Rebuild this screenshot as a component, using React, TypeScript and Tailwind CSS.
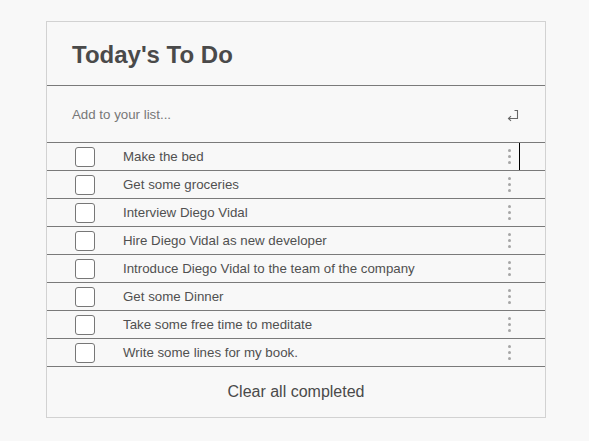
import React from 'react'

const items = [
  'Make the bed',
  'Get some groceries',
  'Interview Diego Vidal',
  'Hire Diego Vidal as new developer',
  'Introduce Diego Vidal to the team of the company',
  'Get some Dinner',
  'Take some free time to meditate',
  'Write some lines for my book.',
]

const Kebab = () => (
  <div className="flex flex-col gap-[3px] items-center">
    <span className="w-[3px] h-[3px] rounded-full bg-[#a6a6a6]" />
    <span className="w-[3px] h-[3px] rounded-full bg-[#a6a6a6]" />
    <span className="w-[3px] h-[3px] rounded-full bg-[#a6a6a6]" />
  </div>
)

const App = () => {
  return (
    <div className="min-h-[441px] w-full bg-[#f8f8f8] pt-[21px] pl-[46px] font-['Liberation_Sans',Arial,sans-serif]">
      <div className="w-[500px] border border-[#d2d2d2] bg-[#f8f8f8]">
        <div className="h-[64px] flex items-center pl-[25px] pt-[3px] border-b border-[#7a7a7a]">
          <h1 className="text-[24px] font-bold text-[#4a4a4a] leading-none">Today's To Do</h1>
        </div>

        <div className="h-[57px] flex items-center justify-between pl-[25px] pr-[25px] pt-[2px] border-b border-[#7a7a7a]">
          <span className="text-[13.3px] text-[#777]">Add to your list...</span>
          <svg width="14" height="13" viewBox="0 0 14 13" className="mr-[1px]">
            <path d="M9.5 1.5 H12.5 V9.5 H4 M6 7.2 L3.5 9.5 L6 11.8" fill="none" stroke="#666" strokeWidth="1.1" />
          </svg>
        </div>

        {items.map((item, i) => (
          <div key={i} className="h-[28px] flex items-center border-b border-[#7a7a7a]">
            <div className="w-[20px] h-[20px] ml-[28px] border border-[#777] rounded-[3px] bg-white" />
            <span className="ml-[28px] text-[13.3px] text-[#505050] flex-1">{item}</span>
            <div className="w-[12px] flex justify-center mr-[4px]">
              <Kebab />
            </div>
            {i === 0 ? <div className="w-[1px] h-[27px] bg-black mr-[25px]" /> : <div className="w-[1px] mr-[25px]" />}
          </div>
        ))}

        <div className="h-[50px] flex items-center justify-center">
          <span className="text-[16px] text-[#4a4a4a]">Clear all completed</span>
        </div>
      </div>
    </div>
  )
}

export default App
